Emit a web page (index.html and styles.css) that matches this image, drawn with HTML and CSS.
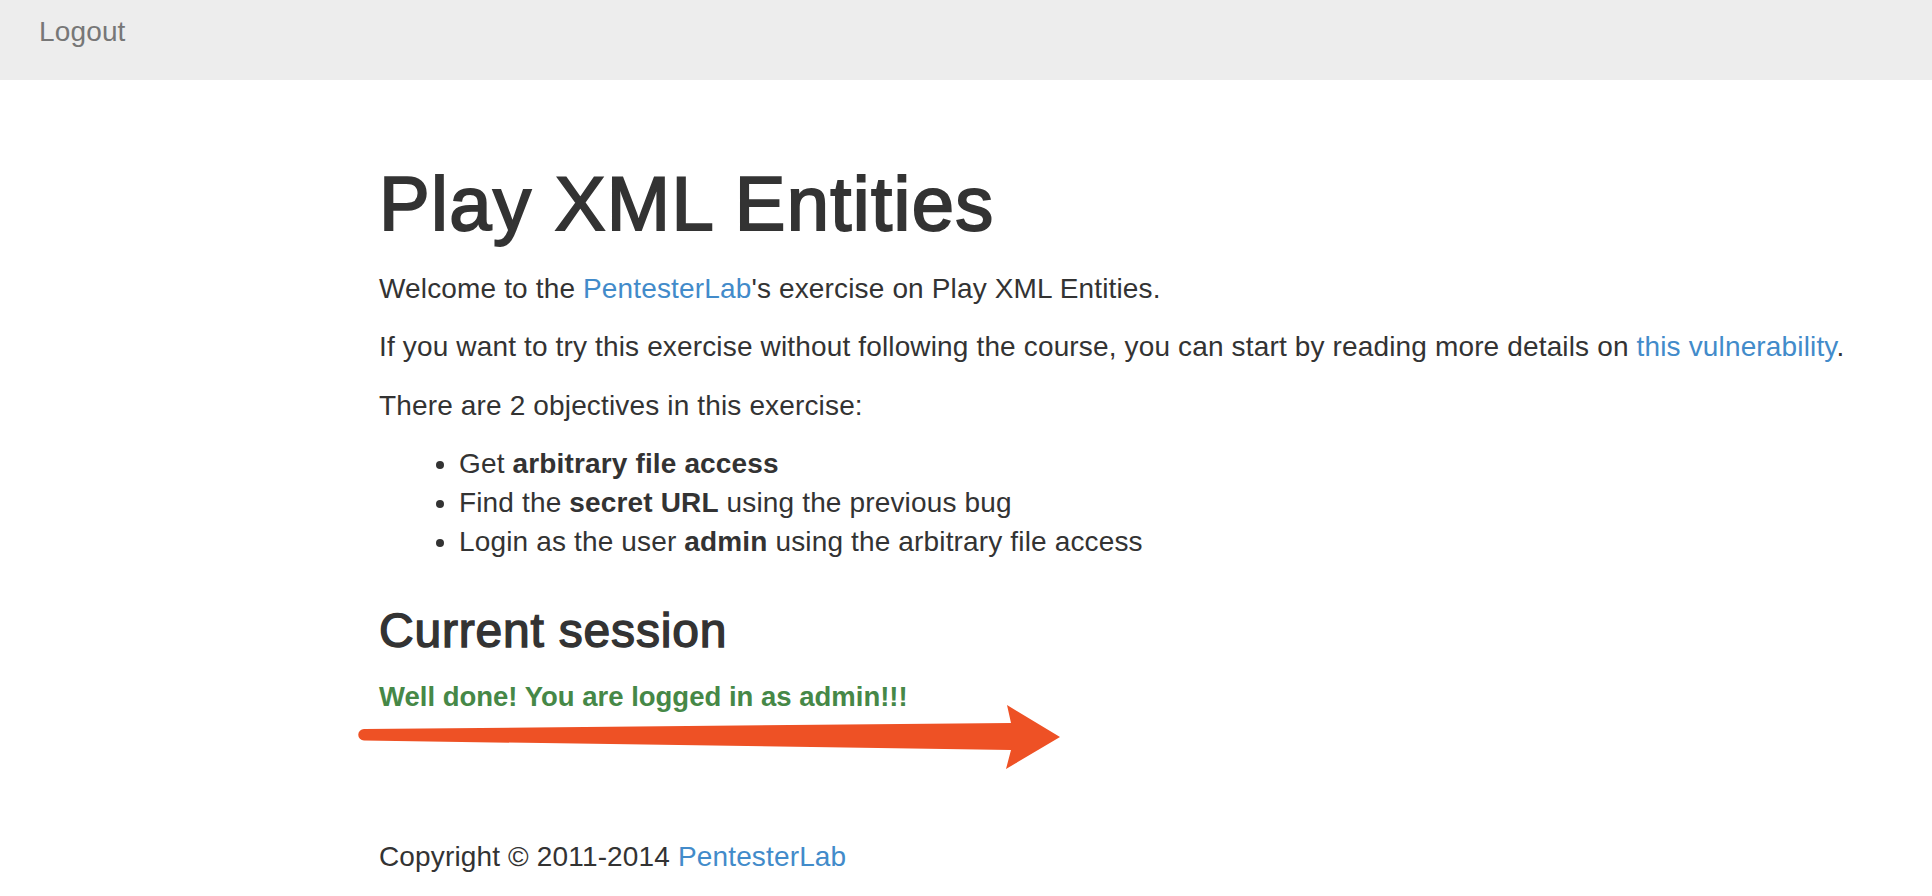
FILE: index.html
```html
<!DOCTYPE html>
<html lang="en">
<head>
<meta charset="utf-8">
<title>PentesterLab » Play XML Entities</title>
<link rel="stylesheet" href="styles.css">
</head>
<body>
<nav class="navbar">
  <a class="nav-link" href="#">Logout</a>
</nav>
<main class="container">
  <h1 class="title">Play XML Entities</h1>
  <p>Welcome to the <a href="#">PentesterLab</a>'s exercise on Play XML Entities.</p>
  <p>If you want to try this exercise without following the course, you can start by reading more details on <a href="#">this vulnerability</a>.</p>
  <p>There are 2 objectives in this exercise:</p>
  <ul class="objectives">
    <li>Get <b>arbitrary file access</b></li>
    <li>Find the <b>secret URL</b> using the previous bug</li>
    <li>Login as the user <b>admin</b> using the arbitrary file access</li>
  </ul>
  <h3 class="subtitle">Current session</h3>
  <p class="text-success">Well done! You are logged in as admin!!!</p>
  <footer class="footer">
    <p>Copyright © 2011-2014 <a href="#">PentesterLab</a></p>
  </footer>
</main>
<svg class="arrow" width="720" height="75" viewBox="350 700 720 75" aria-hidden="true">
  <path d="M364 729 L1011 723 L1007 705 L1060 737 L1006 769 L1011 750 L364 740.5 A5.75 5.75 0 0 1 364 729 Z" fill="#ee5125"/>
</svg>
</body>
</html>
```
FILE: styles.css
```css
html, body {
  margin: 0;
  padding: 0;
  background: #ffffff;
}

body {
  font-family: "Liberation Sans", Helvetica, Arial, sans-serif;
  font-size: 28px;
  line-height: 39px;
  letter-spacing: 0.15px;
  color: #333333;
  position: relative;
  min-height: 896px;
}

a {
  color: #428bca;
  text-decoration: none;
}

.navbar {
  box-sizing: border-box;
  height: 80px;
  padding: 12px 0 0 39px;
  background: #ededed;
}

.nav-link {
  color: #777777;
}

.container {
  padding-left: 379px;
}

.title {
  font-size: 76px;
  line-height: 82.5px;
  font-weight: normal;
  letter-spacing: 1.35px;
  -webkit-text-stroke: 2px #333333;
  margin: 83px 0 23px;
}

p {
  margin: 0 0 19.5px;
}

.objectives {
  margin: 0 0 19.5px;
  padding-left: 80px;
}

.subtitle {
  font-size: 48px;
  line-height: 52.8px;
  font-weight: normal;
  letter-spacing: 0.8px;
  -webkit-text-stroke: 1.4px #333333;
  margin: 43.6px 0 19.6px;
}

.text-success {
  color: #468847;
  font-weight: bold;
  font-size: 27.5px;
  letter-spacing: 0;
}

.footer {
  margin-top: 121px;
}

.footer p {
  margin: 0;
}

.arrow {
  position: absolute;
  left: 350px;
  top: 700px;
  pointer-events: none;
}
```
